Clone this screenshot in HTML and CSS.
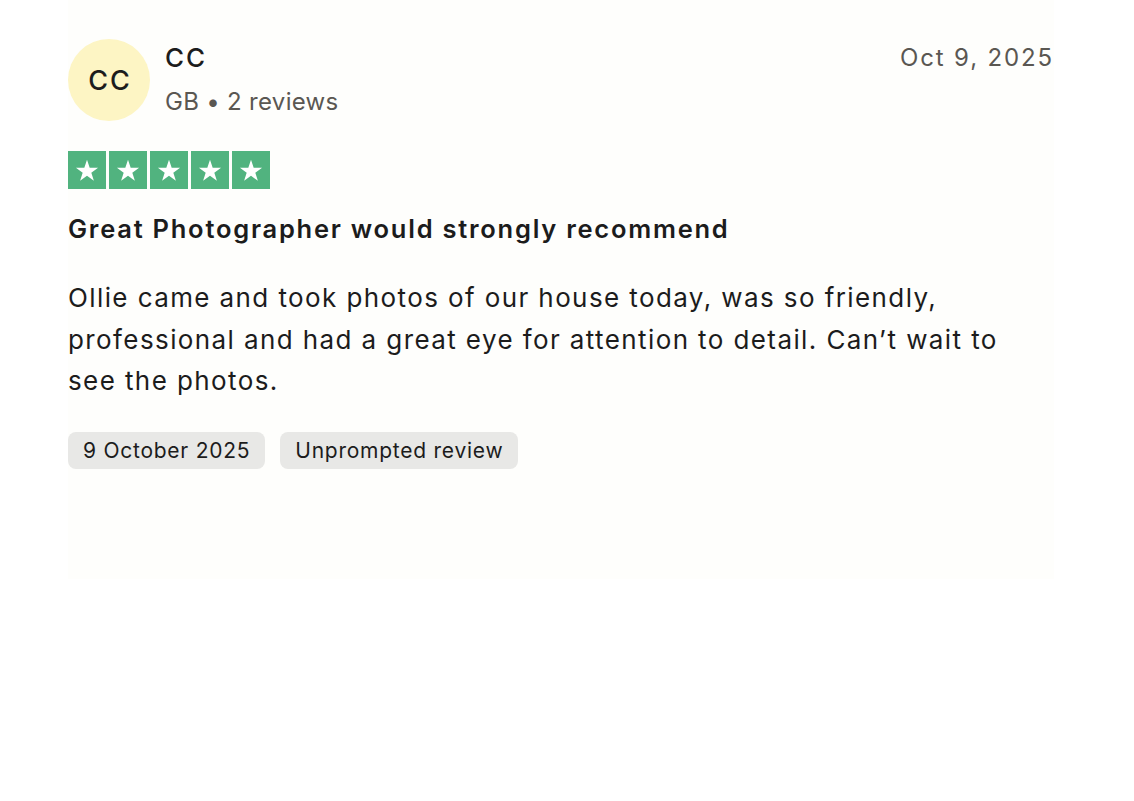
FILE: index.html
```html
<!DOCTYPE html>
<html lang="en">
<head>
<meta charset="utf-8">
<title>Review</title>
<link rel="stylesheet" href="styles.css">
</head>
<body>
<article class="review">
  <header class="review-head">
    <div class="avatar">CC</div>
    <div class="consumer">
      <div class="consumer-name">CC</div>
      <div class="consumer-meta">GB • 2 reviews</div>
    </div>
    <time class="review-date">Oct 9, 2025</time>
  </header>
  <div class="stars">
    <span class="star"><svg viewBox="0 0 24 24"><path d="M12 3.2l2.3 6.9h7.2l-5.8 4.3 2.2 6.9-5.9-4.3-5.9 4.3 2.2-6.9-5.8-4.3h7.2z" fill="#fff"/></svg></span>
    <span class="star"><svg viewBox="0 0 24 24"><path d="M12 3.2l2.3 6.9h7.2l-5.8 4.3 2.2 6.9-5.9-4.3-5.9 4.3 2.2-6.9-5.8-4.3h7.2z" fill="#fff"/></svg></span>
    <span class="star"><svg viewBox="0 0 24 24"><path d="M12 3.2l2.3 6.9h7.2l-5.8 4.3 2.2 6.9-5.9-4.3-5.9 4.3 2.2-6.9-5.8-4.3h7.2z" fill="#fff"/></svg></span>
    <span class="star"><svg viewBox="0 0 24 24"><path d="M12 3.2l2.3 6.9h7.2l-5.8 4.3 2.2 6.9-5.9-4.3-5.9 4.3 2.2-6.9-5.8-4.3h7.2z" fill="#fff"/></svg></span>
    <span class="star"><svg viewBox="0 0 24 24"><path d="M12 3.2l2.3 6.9h7.2l-5.8 4.3 2.2 6.9-5.9-4.3-5.9 4.3 2.2-6.9-5.8-4.3h7.2z" fill="#fff"/></svg></span>
  </div>
  <h2 class="review-title">Great Photographer would strongly recommend</h2>
  <p class="review-text">Ollie came and took photos of our house today, was so friendly, professional and had a great eye for attention to detail. Can’t wait to see the photos.</p>
  <div class="tags">
    <span class="tag">9 October 2025</span>
    <span class="tag">Unprompted review</span>
  </div>
</article>
</body>
</html>
```

FILE: styles.css
```css
html, body {
  margin: 0;
  padding: 0;
  background: #ffffff;
}
body {
  font-family: Inter, "Liberation Sans", Arial, sans-serif;
  color: #1c1c1c;
}
.review {
  width: 986px;
  margin-left: 68px;
  padding-top: 39px;
  padding-bottom: 110px;
  background: #fefefc;
}
.review-head {
  display: flex;
  align-items: flex-start;
}
.avatar {
  width: 82px;
  height: 82px;
  border-radius: 50%;
  background: #fdf5c4;
  display: flex;
  align-items: center;
  justify-content: center;
  font-size: 27px;
  font-weight: 500;
  color: #1c1c1c;
  letter-spacing: 2px;
  text-indent: 2px;
}
.consumer {
  margin-left: 15px;
  display: flex;
  flex-direction: column;
}
.consumer-name {
  font-size: 26px;
  font-weight: 500;
  line-height: 38px;
  letter-spacing: 2px;
}
.consumer-meta {
  font-size: 24px;
  line-height: 32px;
  margin-top: 9px;
  color: #5a5752;
  letter-spacing: 0.3px;
}
.review-date {
  margin-left: auto;
  font-size: 24px;
  line-height: 38px;
  color: #5a5752;
  letter-spacing: 1.85px;
}
.stars {
  display: flex;
  gap: 3px;
  margin-top: 30px;
}
.star {
  width: 38px;
  height: 38px;
  background: #51b37f;
  display: flex;
  align-items: center;
  justify-content: center;
}
.star svg {
  width: 28px;
  height: 28px;
}
.review-title {
  margin: 23px 0 0;
  font-size: 25.5px;
  font-weight: 600;
  line-height: 34px;
  letter-spacing: 1.75px;
}
.review-text {
  margin: 31px 0 0;
  font-size: 26px;
  line-height: 41.5px;
  width: 960px;
  letter-spacing: 1.4px;
}
.tags {
  display: flex;
  gap: 15px;
  margin-top: 30px;
}
.tag {
  background: #e8e8e6;
  border-radius: 8px;
  height: 37px;
  padding: 0 15px;
  display: flex;
  align-items: center;
  font-size: 21px;
  color: #1c1c1c;
  letter-spacing: 0.75px;
}
```
